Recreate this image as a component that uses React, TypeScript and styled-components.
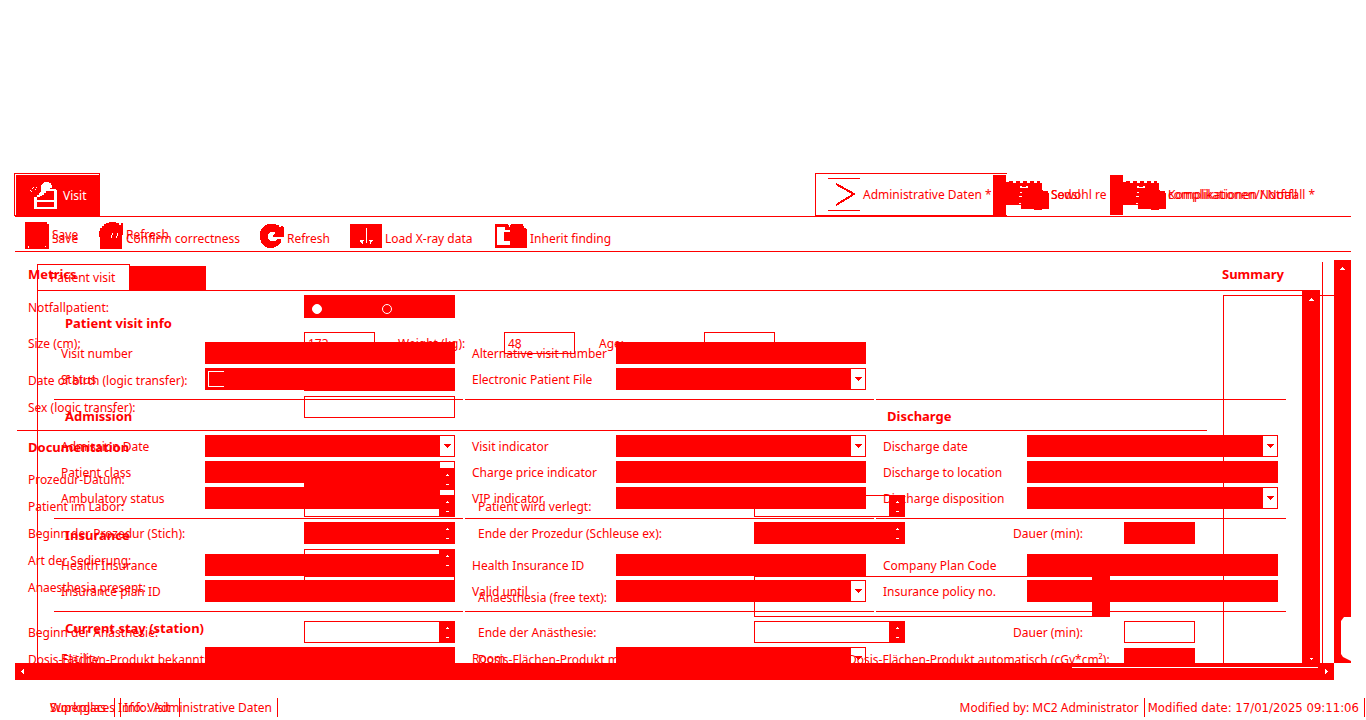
import React from "react";
import styled, { createGlobalStyle, css } from "styled-components";

const red = "#ff0000";

const GlobalStyle = createGlobalStyle`
  *, *::before, *::after { box-sizing: border-box; }
  body { margin: 0; background: #fff; }
  body, button, input, select, textarea {
    font-family: "Noto Sans", "Open Sans", sans-serif;
    font-size: 12px;
    line-height: 16px;
    color: ${red};
  }
  button { border: 0; background: none; padding: 0; text-align: left; }
`;

const Page = styled.div`
  height: 100vh;
  min-height: 480px;
  padding-top: 173px;
  display: flex;
  flex-direction: column;
  overflow: hidden;
`;

const Header = styled.header`
  margin: 0 15px;
  height: 44px;
  flex: none;
  display: flex;
  border-bottom: 1px solid ${red};
  white-space: nowrap;
`;

const VisitTab = styled.button`
  width: 86px;
  margin-left: -1px;
  display: flex;
  align-items: center;
  gap: 6px;
  padding: 2px 0 0 15px;
  color: #fff;
  background: ${red};
  border: 1px solid ${red};
  box-shadow: inset 1px 1px 0 #fff;
`;

const TabList = styled.nav`
  display: flex;
  margin-left: auto;
  padding-right: 35px;
`;

const ActiveTab = styled.button`
  position: relative;
  width: 178px;
  display: flex;
  align-items: center;
  gap: 3px;
  padding-left: 12px;
  border: solid ${red};
  border-width: 1px 0 1px 1px;
  &::after {
    content: "";
    position: absolute;
    top: -1px;
    bottom: -1px;
    left: 100%;
    width: 14px;
    border: solid ${red};
    border-width: 1px 0;
  }
`;

const IconTab = styled.button<{ $width: number }>`
  width: ${(p) => p.$width}px;
  display: flex;
  align-items: center;
  gap: 2px;
`;

const Stack = styled.span`
  display: grid;
  > span { grid-area: 1 / 1; }
`;

const Toolbar = styled.div`
  margin: 0 15px;
  height: 35px;
  flex: none;
  display: flex;
  align-items: flex-end;
  padding: 0 10px 2px;
  border-bottom: 1px solid ${red};
  white-space: nowrap;
`;

const Tool = styled.button<{ $width: number }>`
  position: relative;
  width: ${(p) => p.$width}px;
  flex: none;
  display: flex;
  align-items: center;
  gap: 3px;
  height: 27px;
`;

const ToolText = styled.span<{ $ghost?: boolean }>`
  padding-top: 6px;
  ${(p) => p.$ghost && css`position: absolute; left: 27px; top: -1px;`}
`;

const Main = styled.main`
  margin: 0 15px;
  flex: 1;
  min-height: 0;
  display: flex;
  overflow: hidden;
`;

const Stage = styled.div`
  flex: 1;
  min-width: 0;
  display: grid;
  grid-template: minmax(0, 1fr) / minmax(0, 1fr);
  overflow: hidden;
`;

const Layer = styled.div`
  grid-area: 1 / 1;
  min-width: 0;
  min-height: 0;
  overflow: hidden;
  display: flex;
  white-space: nowrap;
`;

/* Patient visit panel */

const Panel = styled.section`
  flex: 1;
  min-width: 0;
  margin: 12px 11px 0 22px;
  padding-right: 2px;
  display: flex;
  flex-direction: column;
  border-left: 1px solid ${red};
`;

const PanelEdge = styled.div`
  width: 1px;
  margin: 10px 11px 0 -11px;
  background: ${red};
`;

const PanelTabs = styled.div`
  height: 27px;
  flex: none;
  display: flex;
  align-items: flex-end;
  border-bottom: 1px solid ${red};
`;

const PanelTab = styled.button<{ $filled?: boolean }>`
  width: ${(p) => (p.$filled ? 76 : 92)}px;
  height: ${(p) => (p.$filled ? 24 : 26)}px;
  padding-left: 12px;
  ${(p) => p.$filled
    ? css`background: ${red};`
    : css`border: solid ${red}; border-width: 1px 1px 0 0;`}
`;

const PanelBody = styled.div`
  flex: 1;
  min-height: 0;
  display: flex;
`;

const Sections = styled.div`
  flex: 1;
  min-width: 0;
  padding: 16px 16px 0 16px;
  overflow: hidden;
`;

const Section = styled.div`
  display: grid;
  grid-template-columns: minmax(0, 409fr) minmax(0, 409fr) minmax(0, 410fr);
  column-gap: 2px;
`;

const Column = styled.div<{ $line?: boolean }>`
  padding: 0 8px 9px 7px;
  ${(p) => p.$line && css`border-top: 1px solid ${red};`}
`;

const SectionTitle = styled.h3`
  margin: 0;
  height: 35px;
  padding: 8px 0 0 4px;
  font-size: 13px;
  font-weight: 700;
`;

const VisitRow = styled.label`
  display: flex;
  align-items: center;
  height: 22px;
  & + & { margin-top: 4px; }
`;

const VisitLabel = styled.span`
  width: 144px;
  flex: none;
  padding-top: 2px;
`;

const SelectWrap = styled.span`
  flex: 1;
  min-width: 0;
  display: grid;
  > * { grid-area: 1 / 1; }
  > svg { justify-self: end; align-self: center; margin-right: 4px; }
`;

const Select = styled.select`
  appearance: none;
  width: 100%;
  height: 22px;
  border: 1px solid ${red};
  border-radius: 0;
  background: linear-gradient(${red}, ${red}) 0 0 / calc(100% - 14px) 100% no-repeat;
`;

const FilledInput = styled.input`
  flex: 1;
  min-width: 0;
  height: 22px;
  padding: 0 4px;
  border: 1px solid ${red};
  background: ${red};
`;

const StatusField = styled.span`
  flex: 1;
  height: 22px;
  padding: 3px;
  display: flex;
  background: ${red};
`;

const StatusBox = styled.input`
  appearance: none;
  margin: 0;
  width: 16px;
  height: 16px;
  border: solid #fff;
  border-width: 1px 0 1px 1px;
`;

/* Metrics and documentation form */

const Form = styled.form`
  flex: 1;
  min-width: 0;
  padding: 14px 0 0 2px;
`;

const FormTitle = styled.h2<{ $top?: number }>`
  margin: ${(p) => p.$top ?? 0}px 0 0 11px;
  height: 16px;
  font-size: 13px;
  font-weight: 700;
`;

const FormRows = styled.div<{ $top: number }>`
  margin: ${(p) => p.$top}px 0 0 11px;
`;

const FormRow = styled.div<{ $after?: number; $height?: number }>`
  height: ${(p) => p.$height ?? 22}px;
  margin-bottom: ${(p) => p.$after ?? 5}px;
  display: flex;
  align-items: center;
`;

const Cell = styled.label<{ $gap?: number; $top?: boolean }>`
  display: flex;
  align-items: center;
  align-self: ${(p) => (p.$top ? "flex-start" : "center")};
  flex: none;
  margin-left: ${(p) => p.$gap ?? 0}px;
`;

const CellLabel = styled.span<{ $width?: number }>`
  width: ${(p) => p.$width ?? 276}px;
  flex: none;
  padding-top: 2px;
`;

const Box = styled.input<{ $short?: boolean; $fill?: boolean }>`
  width: ${(p) => (p.$short ? 71 : 151)}px;
  height: 22px;
  padding: 0 3px;
  border: 1px solid ${red};
  background: ${(p) => (p.$fill ? red : "transparent")};
`;

const SpinWrap = styled.span`
  display: grid;
  > * { grid-area: 1 / 1; }
  > svg { justify-self: end; }
`;

const RadioGroup = styled.span`
  width: 151px;
  height: 23px;
  padding: 5px 0 0 8px;
  display: flex;
  align-items: center;
  gap: 60px;
  background: ${red};
`;

const Radio = styled.input`
  appearance: none;
  margin: 0;
  width: 10px;
  height: 10px;
  border: 1px solid #fff;
  border-radius: 50%;
  &:checked { background: #fff; }
`;

const FreeText = styled.span`
  display: flex;
  width: 356px;
  height: 41px;
  border: 1px solid ${red};
  border-right: 18px solid ${red};
  textarea { flex: 1; border: 0; resize: none; background: transparent; }
`;

const Rule = styled.hr`
  margin: 0;
  border: 0;
  height: 1px;
  width: calc(100% - 127px);
  background: ${red};
`;

const Summary = styled.aside`
  width: 112px;
  flex: none;
  margin-left: -112px;
  padding-top: 14px;
  display: flex;
  flex-direction: column;
`;

const SummaryTitle = styled.h2`
  margin: 0;
  height: 29px;
  font-size: 13px;
  font-weight: 700;
`;

const SummaryBox = styled.div`
  flex: 1;
  margin-left: 1px;
  border: solid ${red};
  border-width: 1px 0 0 1px;
`;

/* Scroll bars */

const VBar = styled.div<{ $wide?: boolean }>`
  width: ${(p) => (p.$wide ? 18 : 17)}px;
  flex: none;
  margin-top: ${(p) => (p.$wide ? 0 : 8)}px;
  display: flex;
  flex-direction: column;
  align-items: center;
  justify-content: space-between;
  padding: ${(p) => (p.$wide ? "7px 0 3px" : "7px 0 0")};
  background: ${red};
`;

const Notch = styled.svg`
  align-self: flex-end;
`;

const HBar = styled.div`
  margin: 0 32px 0 15px;
  height: 17px;
  flex: none;
  display: flex;
  align-items: center;
  justify-content: space-between;
  padding: 0 6px;
  background: ${red};
`;

const HLine = styled.span`
  width: 246px;
  height: 1px;
  margin: 0 7px 8px auto;
  background: #fff;
`;

const Footer = styled.footer`
  height: 40px;
  flex: none;
  display: flex;
  justify-content: space-between;
  align-items: flex-start;
  padding: 18px 1px 0 50px;
  white-space: nowrap;
`;

const StatusGroup = styled.span`
  display: flex;
`;

const StatusItem = styled.span<{ $width?: number; $date?: boolean }>`
  height: 19px;
  padding-right: 5px;
  margin-right: 3px;
  border-right: 1px solid ${red};
  line-height: 20px;
  ${(p) => p.$date && css`font-family: "DejaVu Sans Condensed", "DejaVu Sans", sans-serif; font-size: 13px;`}
  ${(p) => p.$width && css`width: ${p.$width}px;`}
  &:last-child { margin-right: 0; }
`;

const Arrow = ({ d, fill = "#fff", w = 7, h = 4 }: { d: string; fill?: string; w?: number; h?: number }) => (
  <svg width={w} height={h} viewBox={`0 0 ${w} ${h}`} shapeRendering="crispEdges" aria-hidden="true">
    <path d={d} fill={fill} />
  </svg>
);

const Up = () => <Arrow w={5} h={3} d="M2 0h1v1h1v1h1v1H0V2h1V1h1z" />;
const Down = () => <Arrow w={3} h={2} d="M0 0h3v1H2v1H1V1H0z" />;

const HandIcon = () => (
  <svg width="56" height="40" viewBox="0 0 56 40" shapeRendering="crispEdges" aria-hidden="true">
    <path fill={red} d="M0 0h13v7h3V6h4v2h3V6h4v2h3V6h4v2h3V6h4v2h3V6h3v2h2v7h1v1h5v2h1v16h-7v1h-8v-1H28v-4H13v10H0z" />
    <path fill="#fff" d="M27 11h2v1h4v1h-6zM33 11h2v2h-2zM27 17h2v1h-2zM26 21h3v1h-3zM26 28h2v1h-2z" />
  </svg>
);

const VisitIcon = () => (
  <svg width="27" height="27" viewBox="0 0 27 27" shapeRendering="crispEdges" fill="#fff" aria-hidden="true">
    <path d="M14 0h5v1h2v2h1v3h-2v1h6v1h1v19H4V15h3v-2h2v-2h1v-1h1V3h1V2h1V1h1zM16 9v2h-2v2h-2v1h-2v1H7v3h17V9zM7 20v5h17v-5z" fillRule="evenodd" />
    <path d="M0 8h1v1H0zM1 9h1v1H1zM2 6h1v1H2zM3 5h1v1H3zM6 5h1v1H6zM5 7h1v1H5z" />
  </svg>
);

const ToolIcon = ({ kind }: { kind: string }) => {
  const tall = kind === "save" || kind === "confirm";
  const wide = kind === "xray" || kind === "inherit";
  const w = wide ? 32 : 24;
  const h = tall ? 27 : 24;
  return (
    <svg width={w} height={h} viewBox={`0 0 ${w} ${h}`} shapeRendering="crispEdges" fill={red} aria-hidden="true">
      {kind === "save" && <>
        <path d="M0 0h22v2h2v25H0z" />
        <path fill="#fff" d="M3 24h1v2H3zM20 24h1v1h-1z" />
      </>}
      {kind === "confirm" && <>
        <path d="M7 1h3V0h7v1h3v2h2V1h2v12h-1v14H1V15H0V9h1V6h2V4h2V2h2z" />
        <path fill="#fff" d="M13 11h1v2h-1zM12 13h1v3h-1zM18 11h1v3h-1zM17 14h1v2h-1z" />
      </>}
      {kind === "refresh" && (
        <path d="M8 0h8v1h3v2h2V2h2v1h1v10H13v-2l3-2-2-1h-3l-3 2v5l3 2h4l2-2h4v3l-4 4-4 2H8l-4-2-3-4-1-4V8l3-5 3-2z" />
      )}
      {kind === "xray" && <>
        <path d="M0 0h32v24H0z" />
        <path fill="#fff" d="M16 4h1v15h-1zM10 16h4v1h-1v3h-1v-1h-1v-1h-1zM19 16h4v1h-1v1h-1v2h-1v-3h-1z" />
      </>}
      {kind === "inherit" && (
        <path fillRule="evenodd" d="M0 0h13v1h1v2h1V1h1V0h12v2h1v2h2v1h1v19H0zM2 3v18h13v-4h-6V8h6V6h-5V3z" />
      )}
    </svg>
  );
};

const TextField = ({ label }: { label: string }) => (
  <VisitRow>
    <VisitLabel>{label}</VisitLabel>
    <FilledInput type="text" />
  </VisitRow>
);

const SelectField = ({ label }: { label: string }) => (
  <VisitRow>
    <VisitLabel>{label}</VisitLabel>
    <SelectWrap>
      <Select defaultValue=""><option value="" /></Select>
      <Arrow fill={red} d="M0 0h7v1H6v1H5v1H4v1H3V3H2V2H1V1H0z" />
    </SelectWrap>
  </VisitRow>
);

const SpinField = ({ fill }: { fill?: boolean }) => (
  <SpinWrap>
    <Box type="text" $fill={fill} />
    <svg width="16" height="22" viewBox="0 0 16 22" shapeRendering="crispEdges" aria-hidden="true">
      <path fill={red} d="M0 0h16v22H0z" />
      <path fill="#fff" d="M8 6h1v1h1v1H7V7h1zM7 16h3v1H7z" />
    </svg>
  </SpinWrap>
);

export default function App() {
  return (
    <>
      <GlobalStyle />
      <Page>
        <Header>
          <VisitTab type="button"><VisitIcon />Visit</VisitTab>
          <TabList>
            <ActiveTab type="button">
              <svg width="32" height="33" viewBox="0 0 32 33" shapeRendering="crispEdges" aria-hidden="true">
                <path d="M0 .5h32M0 32.5h32" stroke={red} />
                <path d="M8 6l18 10L8 27" fill="none" stroke={red} strokeWidth="2" />
              </svg>
              Administrative Daten *
            </ActiveTab>
            <IconTab type="button" $width={117}>
              <HandIcon />
              <Stack><span>Sowohl re</span><span>Sedsl</span></Stack>
            </IconTab>
            <IconTab type="button" $width={206}>
              <HandIcon />
              <Stack><span>Komplikationen / Notfall *</span><span>complikationen/Notfall</span></Stack>
            </IconTab>
          </TabList>
        </Header>

        <Toolbar>
          <Tool type="button" $width={74}><ToolIcon kind="save" /><ToolText>Save</ToolText><ToolText $ghost>Save</ToolText></Tool>
          <Tool type="button" $width={161}><ToolIcon kind="confirm" /><ToolText>Confirm correctness</ToolText><ToolText $ghost>Refresh</ToolText></Tool>
          <Tool type="button" $width={90}><ToolIcon kind="refresh" /><ToolText>Refresh</ToolText></Tool>
          <Tool type="button" $width={145}><ToolIcon kind="xray" /><ToolText>Load X-ray data</ToolText></Tool>
          <Tool type="button" $width={120}><ToolIcon kind="inherit" /><ToolText>Inherit finding</ToolText></Tool>
        </Toolbar>

        <Main>
          <Stage>
            <Layer>
              <Panel>
                <PanelTabs>
                  <PanelTab type="button">Patient visit</PanelTab>
                  <PanelTab type="button" $filled aria-label="Next tab" />
                </PanelTabs>
                <PanelBody>
                  <Sections>
                    <Section>
                      <Column>
                        <SectionTitle>Patient visit info</SectionTitle>
                        <TextField label="Visit number" />
                        <VisitRow>
                          <VisitLabel>Status</VisitLabel>
                          <StatusField><StatusBox type="checkbox" /></StatusField>
                        </VisitRow>
                      </Column>
                      <Column>
                        <SectionTitle />
                        <TextField label="Alternative visit number" />
                        <SelectField label="Electronic Patient File" />
                      </Column>
                    </Section>
                    <Section>
                      <Column $line>
                        <SectionTitle>Admission</SectionTitle>
                        <SelectField label="Admission Date" />
                        <SelectField label="Patient class" />
                        <SelectField label="Ambulatory status" />
                      </Column>
                      <Column $line>
                        <SectionTitle />
                        <SelectField label="Visit indicator" />
                        <TextField label="Charge price indicator" />
                        <TextField label="VIP indicator" />
                      </Column>
                      <Column $line>
                        <SectionTitle>Discharge</SectionTitle>
                        <SelectField label="Discharge date" />
                        <TextField label="Discharge to location" />
                        <SelectField label="Discharge disposition" />
                      </Column>
                    </Section>
                    <Section>
                      <Column $line>
                        <SectionTitle>Insurance</SectionTitle>
                        <TextField label="Health Insurance" />
                        <TextField label="Insurance plan ID" />
                      </Column>
                      <Column $line>
                        <SectionTitle />
                        <TextField label="Health Insurance ID" />
                        <SelectField label="Valid until" />
                      </Column>
                      <Column $line>
                        <SectionTitle />
                        <TextField label="Company Plan Code" />
                        <TextField label="Insurance policy no." />
                      </Column>
                    </Section>
                    <Section>
                      <Column $line>
                        <SectionTitle>Current stay (station)</SectionTitle>
                        <TextField label="Facility" />
                      </Column>
                      <Column $line>
                        <SectionTitle />
                        <SelectField label="Room" />
                      </Column>
                      <Column $line />
                    </Section>
                  </Sections>
                  <VBar $wide><Up /><Down /></VBar>
                </PanelBody>
              </Panel>
              <PanelEdge />
            </Layer>

            <Layer>
              <Form>
                <FormTitle>Metrics</FormTitle>
                <FormRows $top={13}>
                  <FormRow $height={23} $after={14}>
                    <CellLabel>Notfallpatient:</CellLabel>
                    <RadioGroup role="radiogroup" aria-label="Notfallpatient">
                      <Radio type="radio" name="emergency" aria-label="Ja" defaultChecked />
                      <Radio type="radio" name="emergency" aria-label="Nein" />
                    </RadioGroup>
                  </FormRow>
                  <FormRow $after={15}>
                    <Cell><CellLabel>Size (cm):</CellLabel><Box $short defaultValue="173" /></Cell>
                    <Cell $gap={23}><CellLabel $width={106}>Weight (kg):</CellLabel><Box $short defaultValue="48" /></Cell>
                    <Cell $gap={24}><CellLabel $width={105}>Age:</CellLabel><Box $short /></Cell>
                  </FormRow>
                  <FormRow>
                    <Cell><CellLabel>Date of birth (logic transfer):</CellLabel><Box $fill /></Cell>
                  </FormRow>
                  <FormRow $after={12}>
                    <Cell><CellLabel>Sex (logic transfer):</CellLabel><Box /></Cell>
                  </FormRow>
                </FormRows>
                <Rule />
                <FormTitle $top={8}>Documentation</FormTitle>
                <FormRows $top={13}>
                  <FormRow>
                    <Cell><CellLabel>Prozedur-Datum:</CellLabel><SpinField fill /></Cell>
                  </FormRow>
                  <FormRow>
                    <Cell><CellLabel>Patient im Labor:</CellLabel><SpinField /></Cell>
                    <Cell $gap={23}><CellLabel>Patient wird verlegt:</CellLabel><SpinField /></Cell>
                  </FormRow>
                  <FormRow>
                    <Cell><CellLabel>Beginn der Prozedur (Stich):</CellLabel><SpinField fill /></Cell>
                    <Cell $gap={23}><CellLabel>Ende der Prozedur (Schleuse ex):</CellLabel><SpinField fill /></Cell>
                    <Cell $gap={108}><CellLabel $width={111}>Dauer (min):</CellLabel><Box $short $fill /></Cell>
                  </FormRow>
                  <FormRow>
                    <Cell><CellLabel>Art der Sedierung:</CellLabel><SpinField /></Cell>
                  </FormRow>
                  <FormRow $height={41} $after={4}>
                    <Cell $top><CellLabel>Anaesthesia present:</CellLabel><Box /></Cell>
                    <Cell $gap={23}><CellLabel>Anaesthesia (free text):</CellLabel><FreeText><textarea /></FreeText></Cell>
                  </FormRow>
                  <FormRow>
                    <Cell><CellLabel>Beginn der Anästhesie:</CellLabel><SpinField /></Cell>
                    <Cell $gap={23}><CellLabel>Ende der Anästhesie:</CellLabel><SpinField /></Cell>
                    <Cell $gap={108}><CellLabel $width={111}>Dauer (min):</CellLabel><Box $short /></Cell>
                  </FormRow>
                  <FormRow>
                    <Cell><CellLabel>Dosis-Flächen-Produkt bekannt:</CellLabel><Box $fill /></Cell>
                    <Cell $gap={23}><CellLabel>Dosis-Flächen-Produkt manuell:</CellLabel><Box $short $fill /></Cell>
                    <Cell $gap={23}><CellLabel>Dosis-Flächen-Produkt automatisch (cGy*cm²):</CellLabel><Box $short $fill /></Cell>
                  </FormRow>
                </FormRows>
              </Form>
              <Summary>
                <SummaryTitle>Summary</SummaryTitle>
                <SummaryBox />
              </Summary>
            </Layer>
          </Stage>
          <VBar>
            <Up />
            <Notch width="10" height="46" viewBox="0 0 10 46" fill="#fff" aria-hidden="true">
              <path d="M3 0h7v44l-4-2-4-2-2-3V4z" />
            </Notch>
          </VBar>
        </Main>

        <HBar>
          <Arrow w={3} h={5} d="M2 0h1v5H2V4H1V3H0V2h1V1h1z" />
          <HLine />
          <Arrow w={3} h={5} d="M0 0h1v1h1v1h1v1H2v1H1v1H0z" />
        </HBar>

        <Footer>
          <Stack>
            <span><StatusGroup>
              <StatusItem $width={65}>Superglas</StatusItem>
              <StatusItem $width={62}>Info: Visit</StatusItem>
            </StatusGroup></span>
            <span><StatusGroup>
              <StatusItem $width={71}>Workplaces</StatusItem>
              <StatusItem>Info: Administrative Daten</StatusItem>
            </StatusGroup></span>
          </Stack>
          <StatusGroup>
            <StatusItem>Modified by: MC2 Administrator</StatusItem>
            <StatusItem $date>Modified date: 17/01/2025 09:11:06</StatusItem>
          </StatusGroup>
        </Footer>
      </Page>
    </>
  );
}
